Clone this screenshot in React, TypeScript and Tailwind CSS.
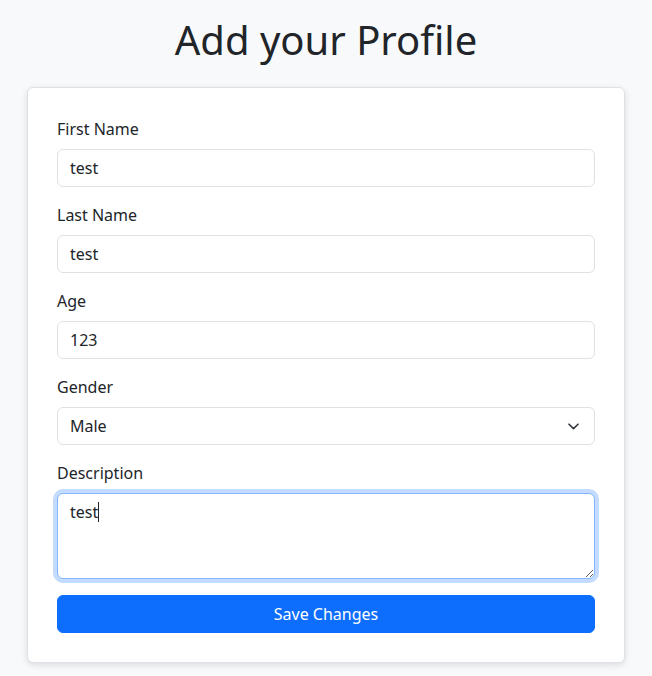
import React from "react";

const inputCls =
  "block w-full h-[38px] px-3 py-[6px] text-base leading-6 text-[#212529] bg-white border border-[#dee2e6] rounded-[6px] outline-none";

function Field({ label, children }: { label: string; children: React.ReactNode }) {
  return (
    <div className="mb-4">
      <label className="block mb-2 text-base leading-6 text-[#212529]">{label}</label>
      {children}
    </div>
  );
}

export default function App() {
  return (
    <div
      className="min-h-[676px] bg-[#f8f9fa] text-[#212529] pt-4"
      style={{ fontFamily: '"Noto Sans", "Open Sans", sans-serif' }}
    >
      <h1 className="text-center text-[40px] leading-[48px] font-normal mb-[23px]">Add your Profile</h1>
      <div className="w-[598px] mx-auto bg-white border border-[#dee2e6] rounded-[6px] p-[29px] shadow-[0_2px_6px_rgba(0,0,0,0.12)]">
        <Field label="First Name">
          <input className={inputCls} defaultValue="test" />
        </Field>
        <Field label="Last Name">
          <input className={inputCls} defaultValue="test" />
        </Field>
        <Field label="Age">
          <input className={inputCls} defaultValue="123" />
        </Field>
        <Field label="Gender">
          <div className="relative">
            <select className={inputCls + " appearance-none pr-10"} defaultValue="Male">
              <option>Male</option>
              <option>Female</option>
            </select>
            <svg
              className="absolute right-[16px] top-[16px] pointer-events-none"
              width="11"
              height="7"
              viewBox="0 0 11 7"
              fill="none"
              stroke="#343a40"
              strokeWidth="1.6"
              strokeLinecap="round"
              strokeLinejoin="round"
            >
              <path d="M1 1.2 5.5 5.6 10 1.2" />
            </svg>
          </div>
        </Field>
        <Field label="Description">
          <div className="relative">
            <textarea
              rows={3}
              defaultValue="test"
              className="block w-full h-[86px] px-3 py-[6px] text-base leading-6 text-[#212529] bg-white border border-[#86b7fe] rounded-[6px] outline-none shadow-[0_0_0_4px_rgba(13,110,253,0.25)] resize-y"
            />
            <span className="absolute left-[41px] top-[9px] w-px h-[20px] bg-[#212529]" />
          </div>
        </Field>
        <button className="block w-full h-[38px] bg-[#0d6efd] text-white text-base leading-6 rounded-[6px] border border-[#0d6efd]">
          Save Changes
        </button>
      </div>
    </div>
  );
}
